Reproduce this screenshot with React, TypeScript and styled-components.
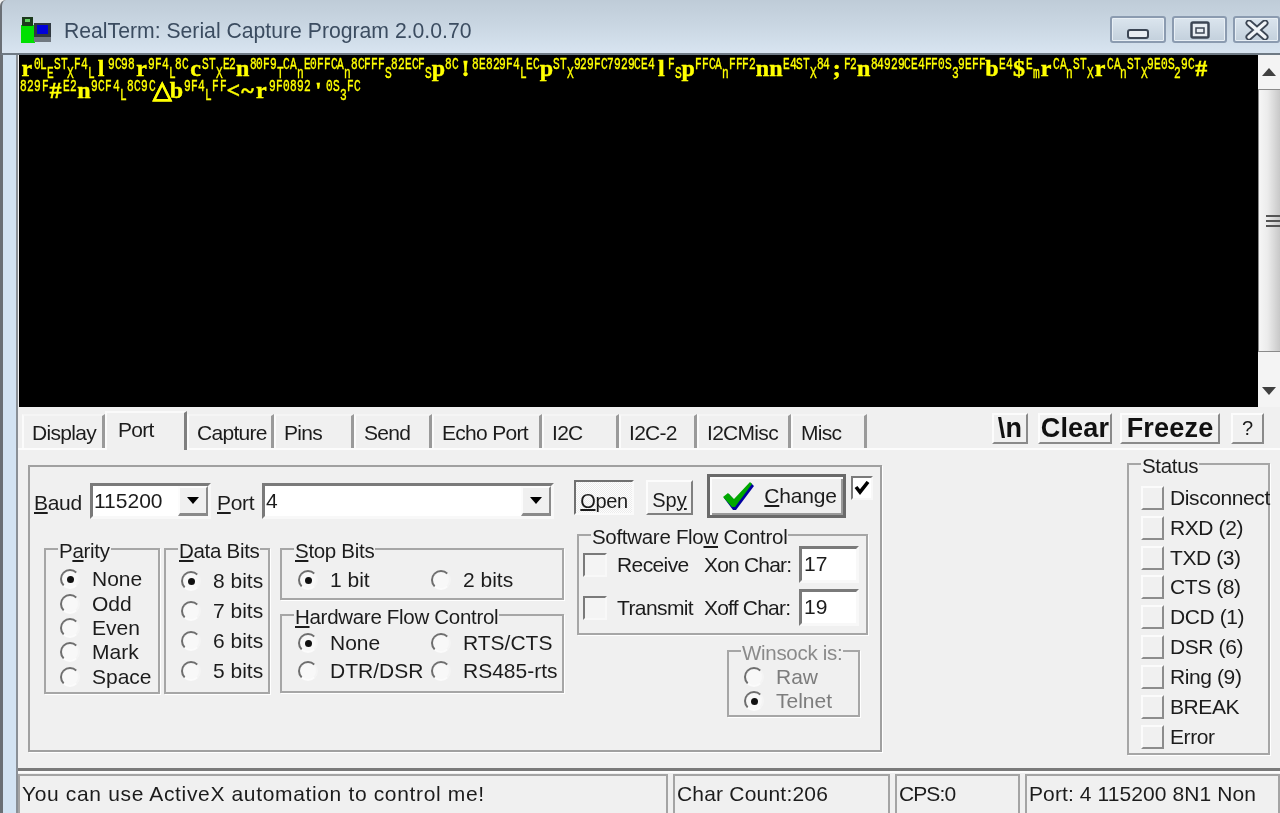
import React from "react";
import styled, { createGlobalStyle } from "styled-components";

const GlobalStyle = createGlobalStyle`
  html, body {
    margin: 0;
    padding: 0;
    background: #f0f0f0;
    overflow: hidden;
  }
  * { box-sizing: border-box; }
`;

// terminal dump: "*x" is a big glyph, "_x" a small one dropped half a row
const LINE_1 =
  "*r 0 L _E S T _X F 4 _L *l 9 C 9 8 *r 9 F 4 _L 8 C *c S T _X E 2 *n 8 0 F 9 _T C A _n E 0 F F C A _n 8 C F F F _S 8 2 E C F _S *p 8 C *! 8 E 8 2 9 F 4 _L E C *p S T _X 9 2 9 F C 7 9 2 9 C E 4 *l F _S *p F F C A _n F F F 2 *n *n E 4 S T _X 8 4 *; F 2 *n 8 4 9 2 9 C E 4 F F 0 S _3 9 E F F *b E 4 *$ E _m *r C A _n S T _X *r C A _n S T _X 9 E 0 S _2 9 C *#";
const LINE_2 =
  "8 2 9 F *# E 2 *n 9 C F 4 _L 8 C 9 C *△ *b 9 F 4 _L F F *< *~ *r 9 F 0 8 9 2 *' 0 S _3 F C";

const TABS = [
  { label: "Display", w: 83 },
  { label: "Port", w: 82, active: true },
  { label: "Capture", w: 87 },
  { label: "Pins", w: 80 },
  { label: "Send", w: 78 },
  { label: "Echo Port", w: 110 },
  { label: "I2C", w: 77 },
  { label: "I2C-2", w: 78 },
  { label: "I2CMisc", w: 94 },
  { label: "Misc", w: 76 },
];

const LEDS = ["Disconnect", "RXD (2)", "TXD (3)", "CTS (8)", "DCD (1)", "DSR (6)", "Ring (9)", "BREAK", "Error"];

const TermLines = ({ source, gap }: { source: string; gap?: number }) => (
  <TermLine $gap={gap}>
    {source.split(" ").map((tok, i) => {
      if (tok[0] === "*") return <BigGlyph key={i}>{tok.slice(1)}</BigGlyph>;
      if (tok[0] === "_") return <SmallGlyph key={i} $low>{tok.slice(1)}</SmallGlyph>;
      return <SmallGlyph key={i}>{tok}</SmallGlyph>;
    })}
  </TermLine>
);

const Option = ({ label, checked, disabled }: { label: string; checked?: boolean; disabled?: boolean }) => (
  <RadioRow $disabled={disabled}>
    <Radio $checked={checked} />
    <span>{label}</span>
  </RadioRow>
);

export default function App() {
  return (
    <>
      <GlobalStyle />
      <Window>
        <TitleBar>
          <svg width="34" height="28" viewBox="0 0 34 28">
            <rect x="2" y="9" width="14" height="18" fill="#00e000" />
            <rect x="3" y="1" width="11" height="9" fill="#1c3a1c" />
            <rect x="6" y="3" width="5" height="3" fill="#60d060" />
            <rect x="15" y="7" width="17" height="14" fill="#303840" />
            <rect x="18" y="9" width="11" height="9" fill="#0000d8" />
            <rect x="15" y="21" width="17" height="5" fill="#707880" />
          </svg>
          <TitleText>RealTerm: Serial Capture Program 2.0.0.70</TitleText>
          <WinButtons>
            <WinButton $w={56}>
              <MinGlyph width="22" height="10" viewBox="0 0 22 10">
                <rect x="1" y="1" width="20" height="8" rx="2" fill="#e8edf2" stroke="#3c4654" strokeWidth="2" />
              </MinGlyph>
            </WinButton>
            <WinButton $w={55}>
              <svg width="20" height="18" viewBox="0 0 20 18">
                <rect x="1.5" y="1.5" width="17" height="15" rx="1.5" fill="#e8edf2" stroke="#3c4654" strokeWidth="2.5" />
                <rect x="6" y="7" width="8" height="5" fill="#e8edf2" stroke="#3c4654" strokeWidth="1.5" />
              </svg>
            </WinButton>
            <WinButton $w={47}>
              <svg width="24" height="20" viewBox="0 0 24 20">
                <path d="M4 3 L20 17 M20 3 L4 17" stroke="#3c4654" strokeWidth="7" strokeLinecap="round" />
                <path d="M4 3 L20 17 M20 3 L4 17" stroke="#f2f5f8" strokeWidth="3.5" strokeLinecap="round" />
              </svg>
            </WinButton>
          </WinButtons>
        </TitleBar>

        <Body>
          <LeftFrame />
          <Client>
            <TerminalRow>
              <Terminal>
                <TermLines source={LINE_1} />
                <TermLines source={LINE_2} gap={0.45} />
              </Terminal>
              <ScrollBar>
                <ScrollArrow>
                  <svg width="14" height="8" viewBox="0 0 14 8"><path d="M7 0 L14 8 H0 Z" fill="#404040" /></svg>
                </ScrollArrow>
                <ScrollThumb>
                  <Grip />
                  <Grip />
                  <Grip />
                </ScrollThumb>
                <ScrollArrow $bottom>
                  <svg width="14" height="8" viewBox="0 0 14 8"><path d="M0 0 H14 L7 8 Z" fill="#404040" /></svg>
                </ScrollArrow>
              </ScrollBar>
            </TerminalRow>

            <TabRow>
              <Tabs>
                {TABS.map((t) => (
                  <Tab key={t.label} $w={t.w} $active={t.active}>{t.label}</Tab>
                ))}
              </Tabs>
              <TabButtons>
                <BoldButton $w={36}>\n</BoldButton>
                <BoldButton $w={74} $ml={10}>Clear</BoldButton>
                <BoldButton $w={100} $ml={8}>Freeze</BoldButton>
                <HelpButton>?</HelpButton>
              </TabButtons>
            </TabRow>

            <PageArea>
              <PortPanel>
                <LeftCol>
                  <TopRow>
                    <FieldLabel><u>B</u>aud</FieldLabel>
                    <Combo $w={121}>
                      <ComboValue>115200</ComboValue>
                      <ComboArrow />
                    </Combo>
                    <FieldLabel $ml={6}><u>P</u>ort</FieldLabel>
                    <Combo $w={292}>
                      <ComboValue>4</ComboValue>
                      <ComboArrow />
                    </Combo>
                  </TopRow>
                  <GroupsRow>
                    <Group $w={116} $h={146}>
                      <Legend><span>P<u>a</u>rity</span></Legend>
                      <RadioCol $top={21} $left={14} $row={24.4}>
                        <Option label="None" checked />
                        <Option label="Odd" />
                        <Option label="Even" />
                        <Option label="Mark" />
                        <Option label="Space" />
                      </RadioCol>
                    </Group>
                    <Group $w={106} $h={146}>
                      <Legend><span><u>D</u>ata Bits</span></Legend>
                      <RadioCol $top={20} $left={15} $row={30}>
                        <Option label="8 bits" checked />
                        <Option label="7 bits" />
                        <Option label="6 bits" />
                        <Option label="5 bits" />
                      </RadioCol>
                    </Group>
                    <FlowStack>
                      <Group $w={284} $h={52}>
                        <Legend><span><u>S</u>top Bits</span></Legend>
                        <RadioGrid $top={20}>
                          <Option label="1 bit" checked />
                          <Option label="2 bits" />
                        </RadioGrid>
                      </Group>
                      <Group $w={284} $h={79}>
                        <Legend><span><u>H</u>ardware Flow Control</span></Legend>
                        <RadioGrid $top={17}>
                          <Option label="None" checked />
                          <Option label="RTS/CTS" />
                          <Option label="DTR/DSR" />
                          <Option label="RS485-rts" />
                        </RadioGrid>
                      </Group>
                    </FlowStack>
                  </GroupsRow>
                </LeftCol>

                <RightCol>
                  <ButtonRow>
                    <OpenButton><u>O</u>pen</OpenButton>
                    <SpyButton>Sp<u>y</u></SpyButton>
                    <ChangeButton>
                      <svg width="34" height="30" viewBox="0 0 34 30">
                        <path d="M2 17 L7 13 L13 20 L29 2 L32 5 L14 29 L11 29 Z" fill="#0000a0" />
                        <path d="M1 16 L6 12 L12 18 L28 1 L30 3 L13 26 L10 26 Z" fill="#00a800" />
                      </svg>
                      <span><u>C</u>hange</span>
                    </ChangeButton>
                    <CheckBox $small>
                      <svg width="16" height="14" viewBox="0 0 16 14">
                        <path d="M2 6 L6 11 L14 1" fill="none" stroke="#000" strokeWidth="3.6" />
                      </svg>
                    </CheckBox>
                  </ButtonRow>
                  <SoftwareGroup>
                    <Legend><span>Software Flo<u>w</u> Control</span></Legend>
                    <FlowRow>
                      <CheckBox />
                      <FlowLabel>Receive</FlowLabel>
                      <CharLabel>Xon Char:</CharLabel>
                      <CharInput>17</CharInput>
                    </FlowRow>
                    <FlowRow>
                      <CheckBox />
                      <FlowLabel>Transmit</FlowLabel>
                      <CharLabel>Xoff Char:</CharLabel>
                      <CharInput>19</CharInput>
                    </FlowRow>
                  </SoftwareGroup>
                  <WinsockGroup>
                    <Legend $muted>Winsock is:</Legend>
                    <RadioCol $top={17} $left={15} $row={24}>
                      <Option label="Raw" disabled />
                      <Option label="Telnet" checked disabled />
                    </RadioCol>
                  </WinsockGroup>
                </RightCol>
              </PortPanel>

              <StatusGroup>
                <Legend>Status</Legend>
                <LedList>
                  {LEDS.map((name) => (
                    <LedRow key={name}>
                      <Led />
                      <span>{name}</span>
                    </LedRow>
                  ))}
                </LedList>
              </StatusGroup>
            </PageArea>

            <StatusBar>
              <StatusCell $w={650} $ls={0.65}>You can use ActiveX automation to control me!</StatusCell>
              <StatusCell $w={217} $ls={0.2}>Char Count:206</StatusCell>
              <StatusCell $w={125} $ls={-0.9}>CPS:0</StatusCell>
              <StatusCell $w={255} $ls={0.1}>Port: 4 115200 8N1 Non</StatusCell>
            </StatusBar>
          </Client>
        </Body>
      </Window>
    </>
  );
}

const Window = styled.div`
  width: 1280px;
  height: 813px;
  overflow: hidden;
  display: flex;
  flex-direction: column;
  background: #f0f0f0;
  color: #1c1c1c;
  font-family: "Liberation Sans", Arial, sans-serif;
  font-size: 20px;
  filter: blur(0.35px);
`;

const TitleBar = styled.div`
  height: 55px;
  flex-shrink: 0;
  display: flex;
  align-items: flex-start;
  padding: 16px 0 0 17px;
  background: linear-gradient(180deg, #bfccd8 0%, #cbd8e4 55%, #d8e4f0 100%);
  border-left: 2px solid #6a6f75;
  border-top-left-radius: 6px;
  border-bottom: 2px solid #6f7a84;
`;

const TitleText = styled.div`
  margin: 2px 0 0 11px;
  font-size: 21.2px;
  line-height: 26px;
  color: #3b4c60;
`;

const WinButtons = styled.div`
  margin-left: auto;
  display: flex;
  gap: 6px;
`;

const WinButton = styled.div<{ $w: number }>`
  width: ${({ $w }) => $w}px;
  height: 27px;
  display: flex;
  align-items: center;
  justify-content: center;
  border: 2px solid #8b9bb0;
  border-radius: 3px;
  background: linear-gradient(180deg, #dbe5ee, #c3d0dc);
  box-shadow: inset 0 0 0 1px #e8eff5;
`;

const MinGlyph = styled.svg`
  margin-top: 9px;
`;

const Body = styled.div`
  flex: 1;
  min-height: 0;
  display: flex;
`;

const LeftFrame = styled.div`
  width: 18px;
  flex-shrink: 0;
  background: #d3e3f2;
  border-left: 3px solid #6a6f75;
  border-right: 2px solid #8a9096;
`;

const Client = styled.div`
  flex: 1;
  min-width: 0;
  display: flex;
  flex-direction: column;
  background: #f0f0f0;
`;

const TerminalRow = styled.div`
  height: 352px;
  flex-shrink: 0;
  display: flex;
  margin-left: 1px;
`;

const Terminal = styled.div`
  flex: 1;
  min-width: 0;
  background: #000;
  color: #ffff00;
  padding: 3px 0 0 1px;
  overflow: hidden;
`;

const TermLine = styled.div<{ $gap?: number }>`
  height: 22px;
  display: flex;
  align-items: flex-start;
  gap: ${({ $gap }) => $gap ?? 0}px;
  white-space: nowrap;
`;

const SmallGlyph = styled.span<{ $low?: boolean }>`
  width: 6.76px;
  flex-shrink: 0;
  display: flex;
  justify-content: center;
  margin-top: ${({ $low }) => ($low ? 9 : 0)}px;
  font-family: "Liberation Mono", monospace;
  font-size: 17px;
  line-height: 13px;
  transform: scaleX(0.66);
  -webkit-text-stroke: 0.4px #ffff00;
`;

const BigGlyph = styled.span`
  width: 13.5px;
  flex-shrink: 0;
  display: flex;
  justify-content: center;
  margin-top: 1px;
  font-family: "Liberation Serif", serif;
  font-weight: 700;
  font-size: 24px;
  line-height: 19px;
  -webkit-text-stroke: 0.4px #ffff00;
`;

const ScrollBar = styled.div`
  width: 22px;
  flex-shrink: 0;
  display: flex;
  flex-direction: column;
  background: #f4f4f4;
`;

const ScrollArrow = styled.div<{ $bottom?: boolean }>`
  height: ${({ $bottom }) => ($bottom ? 54 : 34)}px;
  display: flex;
  align-items: ${({ $bottom }) => ($bottom ? "flex-end" : "center")};
  justify-content: center;
  padding-bottom: ${({ $bottom }) => ($bottom ? 11 : 0)}px;
`;

const ScrollThumb = styled.div`
  height: 263px;
  display: flex;
  flex-direction: column;
  align-items: flex-end;
  justify-content: center;
  gap: 3px;
  border: 1px solid #8a8a8a;
  border-right: none;
  background: linear-gradient(90deg, #f6f6f6 0%, #ececec 40%, #c8c8c8 100%);
`;

const Grip = styled.div`
  width: 14px;
  height: 2px;
  background: #555;
`;

const TabRow = styled.div`
  height: 43px;
  flex-shrink: 0;
  display: flex;
  align-items: flex-end;
  padding: 0 16px 0 4px;
  border-bottom: 2px solid #fcfcfc;
`;

const Tabs = styled.div`
  display: flex;
  align-items: flex-end;
`;

const Tab = styled.div<{ $w: number; $active?: boolean }>`
  width: ${({ $w }) => $w}px;
  height: ${({ $active }) => ($active ? 39 : 34)}px;
  margin-bottom: ${({ $active }) => ($active ? -2 : 0)}px;
  padding: ${({ $active }) => ($active ? "4px 0 0 11px" : "4px 0 0 8px")};
  line-height: 26px;
  font-size: 21px;
  letter-spacing: -0.7px;
  background: #f0f0f0;
  border-left: 2px solid #fbfbfb;
  border-right: 3px solid ${({ $active }) => ($active ? "#808080" : "#9a9a9a")};
  border-top: 2px solid ${({ $active }) => ($active ? "#fafafa" : "#f5f5f5")};
  position: relative;
  z-index: ${({ $active }) => ($active ? 1 : 0)};
`;

const TabButtons = styled.div`
  margin-left: auto;
  display: flex;
  align-items: flex-start;
  align-self: flex-start;
  margin-top: 6px;
`;

const RaisedButton = styled.div`
  display: flex;
  align-items: center;
  justify-content: center;
  background: #f0f0f0;
  border: 2px solid;
  border-color: #fcfcfc #8a8a8a #8a8a8a #fcfcfc;
`;

const BoldButton = styled(RaisedButton)<{ $w: number; $ml?: number }>`
  width: ${({ $w }) => $w}px;
  height: 31px;
  margin-left: ${({ $ml }) => $ml ?? 0}px;
  font-family: "Liberation Sans", Arial, sans-serif;
  font-weight: 700;
  font-size: 27px;
  letter-spacing: 0.2px;
  color: #111;
`;

const HelpButton = styled(RaisedButton)`
  width: 33px;
  height: 31px;
  margin-left: 11px;
  font-size: 20px;
`;

const PageArea = styled.div`
  flex: 1;
  min-height: 0;
  display: flex;
  align-items: flex-start;
  padding: 0 10px;
`;

const PortPanel = styled.div`
  width: 854px;
  height: 287px;
  margin-top: 15px;
  display: flex;
  border: 2px solid #a0a0a0;
  box-shadow: 1px 1px 0 #fff;
`;

const LeftCol = styled.div`
  width: 544px;
  padding: 16px 0 0 4px;
`;

const TopRow = styled.div`
  display: flex;
  align-items: center;
  height: 36px;
`;

const FieldLabel = styled.span<{ $ml?: number }>`
  width: ${({ $ml }) => ($ml ? 45 : 56)}px;
  margin-left: ${({ $ml }) => $ml ?? 0}px;
  padding-top: 4px;
  font-size: 21px;
  letter-spacing: -0.3px;
`;

const Sunken = styled.div`
  background: #fff;
  border: 3px solid;
  border-color: #7a7a7a #f8f8f8 #f8f8f8 #7a7a7a;
`;

const Combo = styled(Sunken)<{ $w: number }>`
  width: ${({ $w }) => $w}px;
  height: 36px;
  display: flex;
  align-items: center;
  justify-content: space-between;
`;

const ComboValue = styled.span`
  padding-left: 1px;
  font-size: 21px;
`;

const ComboArrow = styled(RaisedButton)`
  width: 30px;
  height: 30px;
  border-bottom-width: 3px;
  &::before {
    content: "";
    width: 0;
    height: 0;
    border-left: 6px solid transparent;
    border-right: 6px solid transparent;
    border-top: 7px solid #000;
  }
`;

const GroupsRow = styled.div`
  display: flex;
  align-items: flex-start;
  margin: 29px 0 0 10px;
  gap: 4px;
`;

const FlowStack = styled.div`
  display: flex;
  flex-direction: column;
  gap: 14px;
  margin-left: 6px;
`;

const Group = styled.div<{ $w: number; $h: number }>`
  position: relative;
  width: ${({ $w }) => $w}px;
  height: ${({ $h }) => $h}px;
  border: 2px solid #a6a6a6;
  box-shadow: 1px 1px 0 #fff;
`;

const Legend = styled.div<{ $muted?: boolean }>`
  position: absolute;
  top: -10px;
  left: 12px;
  padding: 0 1px;
  background: #f0f0f0;
  font-size: 20.5px;
  line-height: 22px;
  letter-spacing: -0.3px;
  white-space: nowrap;
  color: ${({ $muted }) => ($muted ? "#8a8a8a" : "inherit")};
`;

const RadioCol = styled.div<{ $top: number; $left: number; $row: number }>`
  display: grid;
  grid-auto-rows: ${({ $row }) => $row}px;
  padding: ${({ $top }) => $top - 4}px 0 0 ${({ $left }) => $left}px;
`;

const RadioGrid = styled.div<{ $top: number }>`
  display: grid;
  grid-template-columns: 133px 1fr;
  grid-auto-rows: 28px;
  padding: ${({ $top }) => $top - 4}px 0 0 16px;
`;

const RadioRow = styled.div<{ $disabled?: boolean }>`
  display: flex;
  align-items: center;
  gap: 12px;
  font-size: 21px;
  white-space: nowrap;
  color: ${({ $disabled }) => ($disabled ? "#7d7d7d" : "inherit")};
`;

const Radio = styled.span<{ $checked?: boolean }>`
  width: 20px;
  height: 20px;
  flex-shrink: 0;
  display: flex;
  align-items: center;
  justify-content: center;
  border-radius: 50%;
  border: 2px solid;
  border-color: #6e6e6e #f4f4f4 #fbfbfb #6e6e6e;
  background: #f8f8f8;
  &::after {
    content: "";
    width: 7px;
    height: 7px;
    border-radius: 50%;
    background: ${({ $checked }) => ($checked ? "#111" : "transparent")};
  }
`;

const RightCol = styled.div`
  flex: 1;
  padding-top: 7px;
`;

const ButtonRow = styled.div`
  display: flex;
  align-items: flex-start;
  height: 60px;
`;

const OpenButton = styled.div`
  width: 60px;
  height: 35px;
  margin-top: 6px;
  display: flex;
  align-items: center;
  justify-content: center;
  padding-top: 8px;
  font-size: 20px;
  letter-spacing: -0.4px;
  border: 2px solid;
  border-color: #707070 #fafafa #fafafa #707070;
  background: repeating-conic-gradient(#fdfdfd 0 25%, #ececec 0 50%) 0 0 / 2px 2px;
`;

const SpyButton = styled(RaisedButton)`
  width: 47px;
  height: 35px;
  margin: 6px 0 0 12px;
  padding-top: 5px;
  border-color: #fcfcfc #808080 #808080 #fcfcfc;
  font-size: 20px;
`;

const ChangeButton = styled.div`
  width: 139px;
  height: 44px;
  margin-left: 14px;
  display: flex;
  align-items: center;
  justify-content: center;
  gap: 8px;
  padding-left: 6px;
  border: 3px solid #6a6a6a;
  box-shadow: inset 2px 2px 0 #fcfcfc, inset -2px -2px 0 #9a9a9a;
  font-size: 21px;
  letter-spacing: -0.2px;
`;

const CheckBox = styled(Sunken)<{ $small?: boolean }>`
  width: ${({ $small }) => ($small ? 22 : 24)}px;
  height: 24px;
  margin: ${({ $small }) => ($small ? "2px 0 0 5px" : "0")};
  flex-shrink: 0;
  display: flex;
  align-items: center;
  justify-content: center;
  border-width: 2px;
  background: ${({ $small }) => ($small ? "#fff" : "#f4f4f4")};
`;

const SoftwareGroup = styled.div`
  position: relative;
  width: 291px;
  height: 101px;
  margin-left: 3px;
  padding: 4px 0 0 4px;
  border: 2px solid #a6a6a6;
  box-shadow: 1px 1px 0 #fff;
  display: flex;
  flex-direction: column;
`;

const FlowRow = styled.div`
  height: 43px;
  padding-top: 6px;
  display: flex;
  align-items: center;
`;

const FlowLabel = styled.span`
  width: 87px;
  margin-left: 10px;
  font-size: 21px;
  letter-spacing: -0.6px;
  white-space: nowrap;
`;

const CharLabel = styled.span`
  width: 95px;
  font-size: 21px;
  letter-spacing: -0.8px;
  white-space: nowrap;
`;

const CharInput = styled(Sunken)`
  width: 60px;
  height: 37px;
  padding-left: 2px;
  font-size: 21px;
  line-height: 30px;
`;

const WinsockGroup = styled.div`
  position: relative;
  width: 133px;
  height: 67px;
  margin: 15px 0 0 153px;
  border: 2px solid #a6a6a6;
  box-shadow: 1px 1px 0 #fff;
`;

const StatusGroup = styled.div`
  position: relative;
  width: 143px;
  height: 292px;
  margin: 13px 0 0 auto;
  border: 2px solid #a6a6a6;
  box-shadow: 1px 1px 0 #fff;
`;

const LedList = styled.div`
  display: grid;
  grid-auto-rows: 29.85px;
  padding: 18px 0 0 12px;
`;

const LedRow = styled.div`
  display: flex;
  align-items: center;
  gap: 6px;
  font-size: 21px;
  white-space: nowrap;
  letter-spacing: -0.4px;
`;

const Led = styled.span`
  width: 23px;
  height: 24px;
  flex-shrink: 0;
  border: 2px solid;
  border-color: #fbfbfb #8c8c8c #8c8c8c #fbfbfb;
`;

const StatusBar = styled.div`
  height: 45px;
  flex-shrink: 0;
  display: flex;
  gap: 5px;
  border-top: 3px solid #7a7a7a;
  padding-top: 3px;
  box-shadow: inset 0 2px 0 #fcfcfc;
`;

const StatusCell = styled.div<{ $w: number; $ls: number }>`
  width: ${({ $w }) => $w}px;
  flex-shrink: 0;
  padding: 5px 0 0 2px;
  border: 2px solid #a4a4a4;
  border-bottom: none;
  font-size: 21px;
  letter-spacing: ${({ $ls }) => $ls}px;
  line-height: 26px;
  white-space: nowrap;
  overflow: hidden;
`;
